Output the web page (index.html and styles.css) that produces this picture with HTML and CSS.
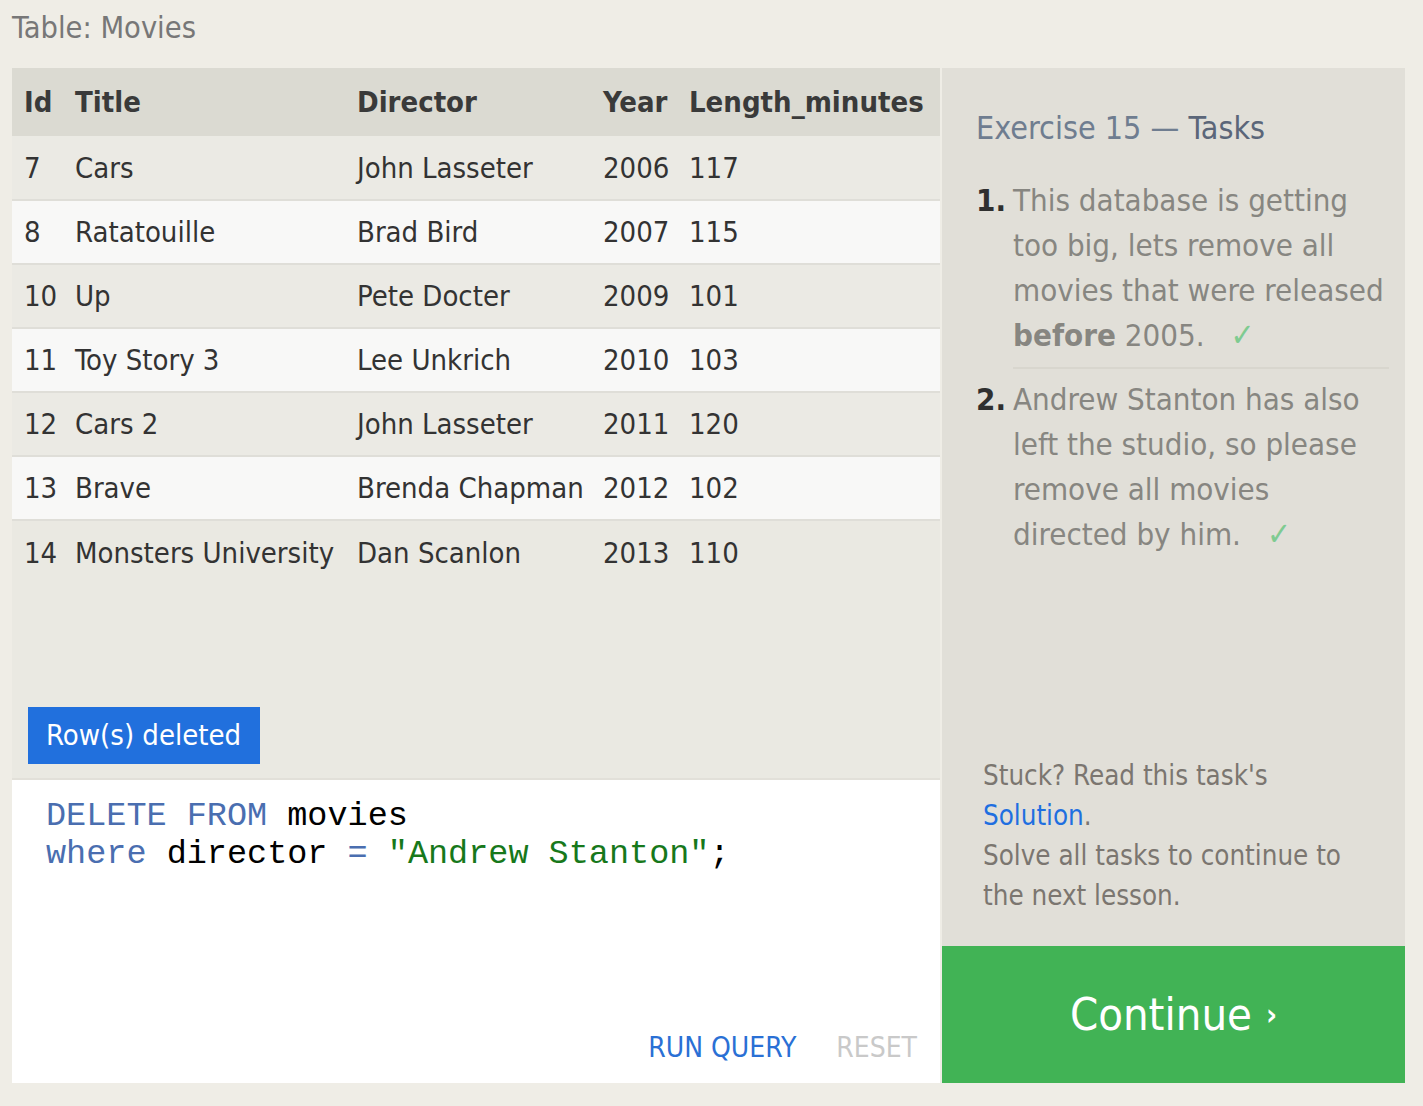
FILE: index.html
```html
<!DOCTYPE html>
<html lang="en">
<head>
<meta charset="utf-8">
<title>SQL Lesson - Exercise 15</title>
<link rel="stylesheet" href="styles.css">
</head>
<body>
<div class="page">
  <div class="caption">Table: Movies</div>
  <div class="main">
    <section class="left">
      <div class="table-area">
        <table class="movies">
          <thead>
            <tr>
              <th class="c-id">Id</th>
              <th class="c-title">Title</th>
              <th class="c-dir">Director</th>
              <th class="c-year">Year</th>
              <th class="c-len">Length_minutes</th>
            </tr>
          </thead>
          <tbody>
            <tr><td>7</td><td>Cars</td><td>John Lasseter</td><td>2006</td><td>117</td></tr>
            <tr><td>8</td><td>Ratatouille</td><td>Brad Bird</td><td>2007</td><td>115</td></tr>
            <tr><td>10</td><td>Up</td><td>Pete Docter</td><td>2009</td><td>101</td></tr>
            <tr><td>11</td><td>Toy Story 3</td><td>Lee Unkrich</td><td>2010</td><td>103</td></tr>
            <tr><td>12</td><td>Cars 2</td><td>John Lasseter</td><td>2011</td><td>120</td></tr>
            <tr><td>13</td><td>Brave</td><td>Brenda Chapman</td><td>2012</td><td>102</td></tr>
            <tr><td>14</td><td>Monsters University</td><td>Dan Scanlon</td><td>2013</td><td>110</td></tr>
          </tbody>
        </table>
      </div>
      <div class="status"><span class="badge">Row(s) deleted</span></div>
      <div class="editor">
<pre class="code"><span class="kw">DELETE</span> <span class="kw">FROM</span> movies
<span class="kw">where</span> director <span class="kw">=</span> <span class="str">"Andrew Stanton"</span>;</pre>
        <div class="actions">
          <span class="run">RUN QUERY</span>
          <span class="reset">RESET</span>
        </div>
      </div>
    </section>
    <aside class="right">
      <div class="tasks">
        <h2 class="tasks-title">Exercise 15 <span class="dash">—</span> <span class="strong">Tasks</span></h2>
        <ol class="task-list">
          <li class="task done">
            <span class="num">1.</span>
            <span class="text">This database is getting too big, lets remove all movies that were released <b>before</b> 2005.<span class="check">✓</span></span>
          </li>
          <li class="task done">
            <span class="num">2.</span>
            <span class="text">Andrew Stanton has also left the studio, so please remove all movies directed by him.<span class="check">✓</span></span>
          </li>
        </ol>
        <div class="help">
          Stuck? Read this task's<br><a class="link">Solution</a>.<br>Solve all tasks to continue to the next lesson.
        </div>
      </div>
      <div class="continue">Continue <span class="chev">›</span></div>
    </aside>
  </div>
</div>
</body>
</html>
```
FILE: styles.css
```css
* { box-sizing: border-box; }
html, body { margin: 0; padding: 0; }
body {
  background: #efede6;
  font-family: "DejaVu Sans Condensed", "DejaVu Sans", sans-serif;
  font-stretch: condensed;
  color: #333;
}
.page {
  padding-left: 12px;
  width: 1405px;
}
.caption {
  height: 68px;
  line-height: 56px;
  padding-bottom: 12px;
  font-size: 30.5px;
  color: #777;
}
.main {
  display: flex;
  gap: 2px;
  height: 1015px;
}
.left {
  width: 928px;
  background: #eae9e2;
  display: flex;
  flex-direction: column;
}
.table-area { flex: 1; }
.movies {
  width: 928px;
  table-layout: fixed;
  border-collapse: collapse;
  font-size: 29px;
}
.movies th, .movies td {
  padding: 0 0 0 12px;
  text-align: left;
  white-space: nowrap;
}
.movies th {
  height: 68px;
  background: #dbdad2;
  font-weight: bold;
  color: #3a3a3a;
}
.movies td {
  height: 64px;
  color: #333;
}
.c-id { width: 51px; }
.c-title { width: 282px; }
.c-dir { width: 246px; }
.c-year { width: 86px; }
.c-len { width: 263px; }
.movies tbody tr { background: #ebeae4; border-top: 2px solid #dfded8; }
.movies tbody tr:first-child { border-top: none; }
.movies tbody tr:nth-child(even) { background: #f8f8f7; }
.movies tbody tr:last-child { background: transparent; }
.status {
  padding: 0 0 14px 16px;
}
.badge {
  display: inline-block;
  background: #2170dd;
  color: #fff;
  font-size: 29px;
  height: 57px;
  line-height: 57px;
  padding: 0 19px 0 18px;
}
.editor {
  height: 305px;
  background: #fff;
  border-top: 2px solid #e2e0d9;
  display: flex;
  flex-direction: column;
}
.code {
  flex: 1;
  margin: 0;
  padding: 17px 0 0 34px;
  font-family: "Liberation Mono", "Courier New", monospace;
  font-size: 33.5px;
  line-height: 38px;
  color: #000;
}
.kw { color: #4a6eb0; }
.str { color: #17781b; }
.actions {
  display: flex;
  justify-content: flex-end;
  gap: 40px;
  padding: 0 23px 19px 0;
  font-size: 28px;
  line-height: 32px;
}
.run { color: #2a70d5; }
.reset { color: #c9c9c9; }
.right {
  width: 463px;
  background: #e1dfd8;
  display: flex;
  flex-direction: column;
}
.tasks {
  flex: 1;
  padding: 40px 16px 31px 34px;
  display: flex;
  flex-direction: column;
}
.tasks-title {
  margin: 0;
  font-size: 32px;
  line-height: 40px;
  font-weight: normal;
  color: #6f7d90;
}
.tasks-title .strong { color: #5b6679; }
.task-list {
  list-style: none;
  margin: 30px 0 0 0;
  padding: 0;
}
.task {
  display: flex;
  font-size: 31px;
  line-height: 45px;
  color: #878681;
}
.num {
  width: 37px;
  flex: none;
  color: #2f2f2f;
  font-weight: bold;
}
.text { flex: 1; }
.task:first-child .text {
  padding-bottom: 9px;
  border-bottom: 2px solid #d8d6ce;
}
.task + .task .text { padding-top: 8px; }
.task + .task .num { padding-top: 8px; }
.text b { font-weight: bold; }
.check {
  display: inline-block;
  line-height: 1;
  font-size: 32px;
  color: #7fcb91;
  margin-left: 26px;
}
.help {
  margin-top: auto;
  padding-left: 7px;
  font-size: 27.5px;
  line-height: 40px;
  color: #7b7670;
}
.link { color: #1f6fe0; }
.continue {
  height: 137px;
  background: #41b355;
  color: #fff;
  font-size: 45px;
  display: flex;
  align-items: center;
  justify-content: center;
}
.chev {
  font-size: 30px;
  margin-left: 14px;
  font-weight: bold;
}
```
